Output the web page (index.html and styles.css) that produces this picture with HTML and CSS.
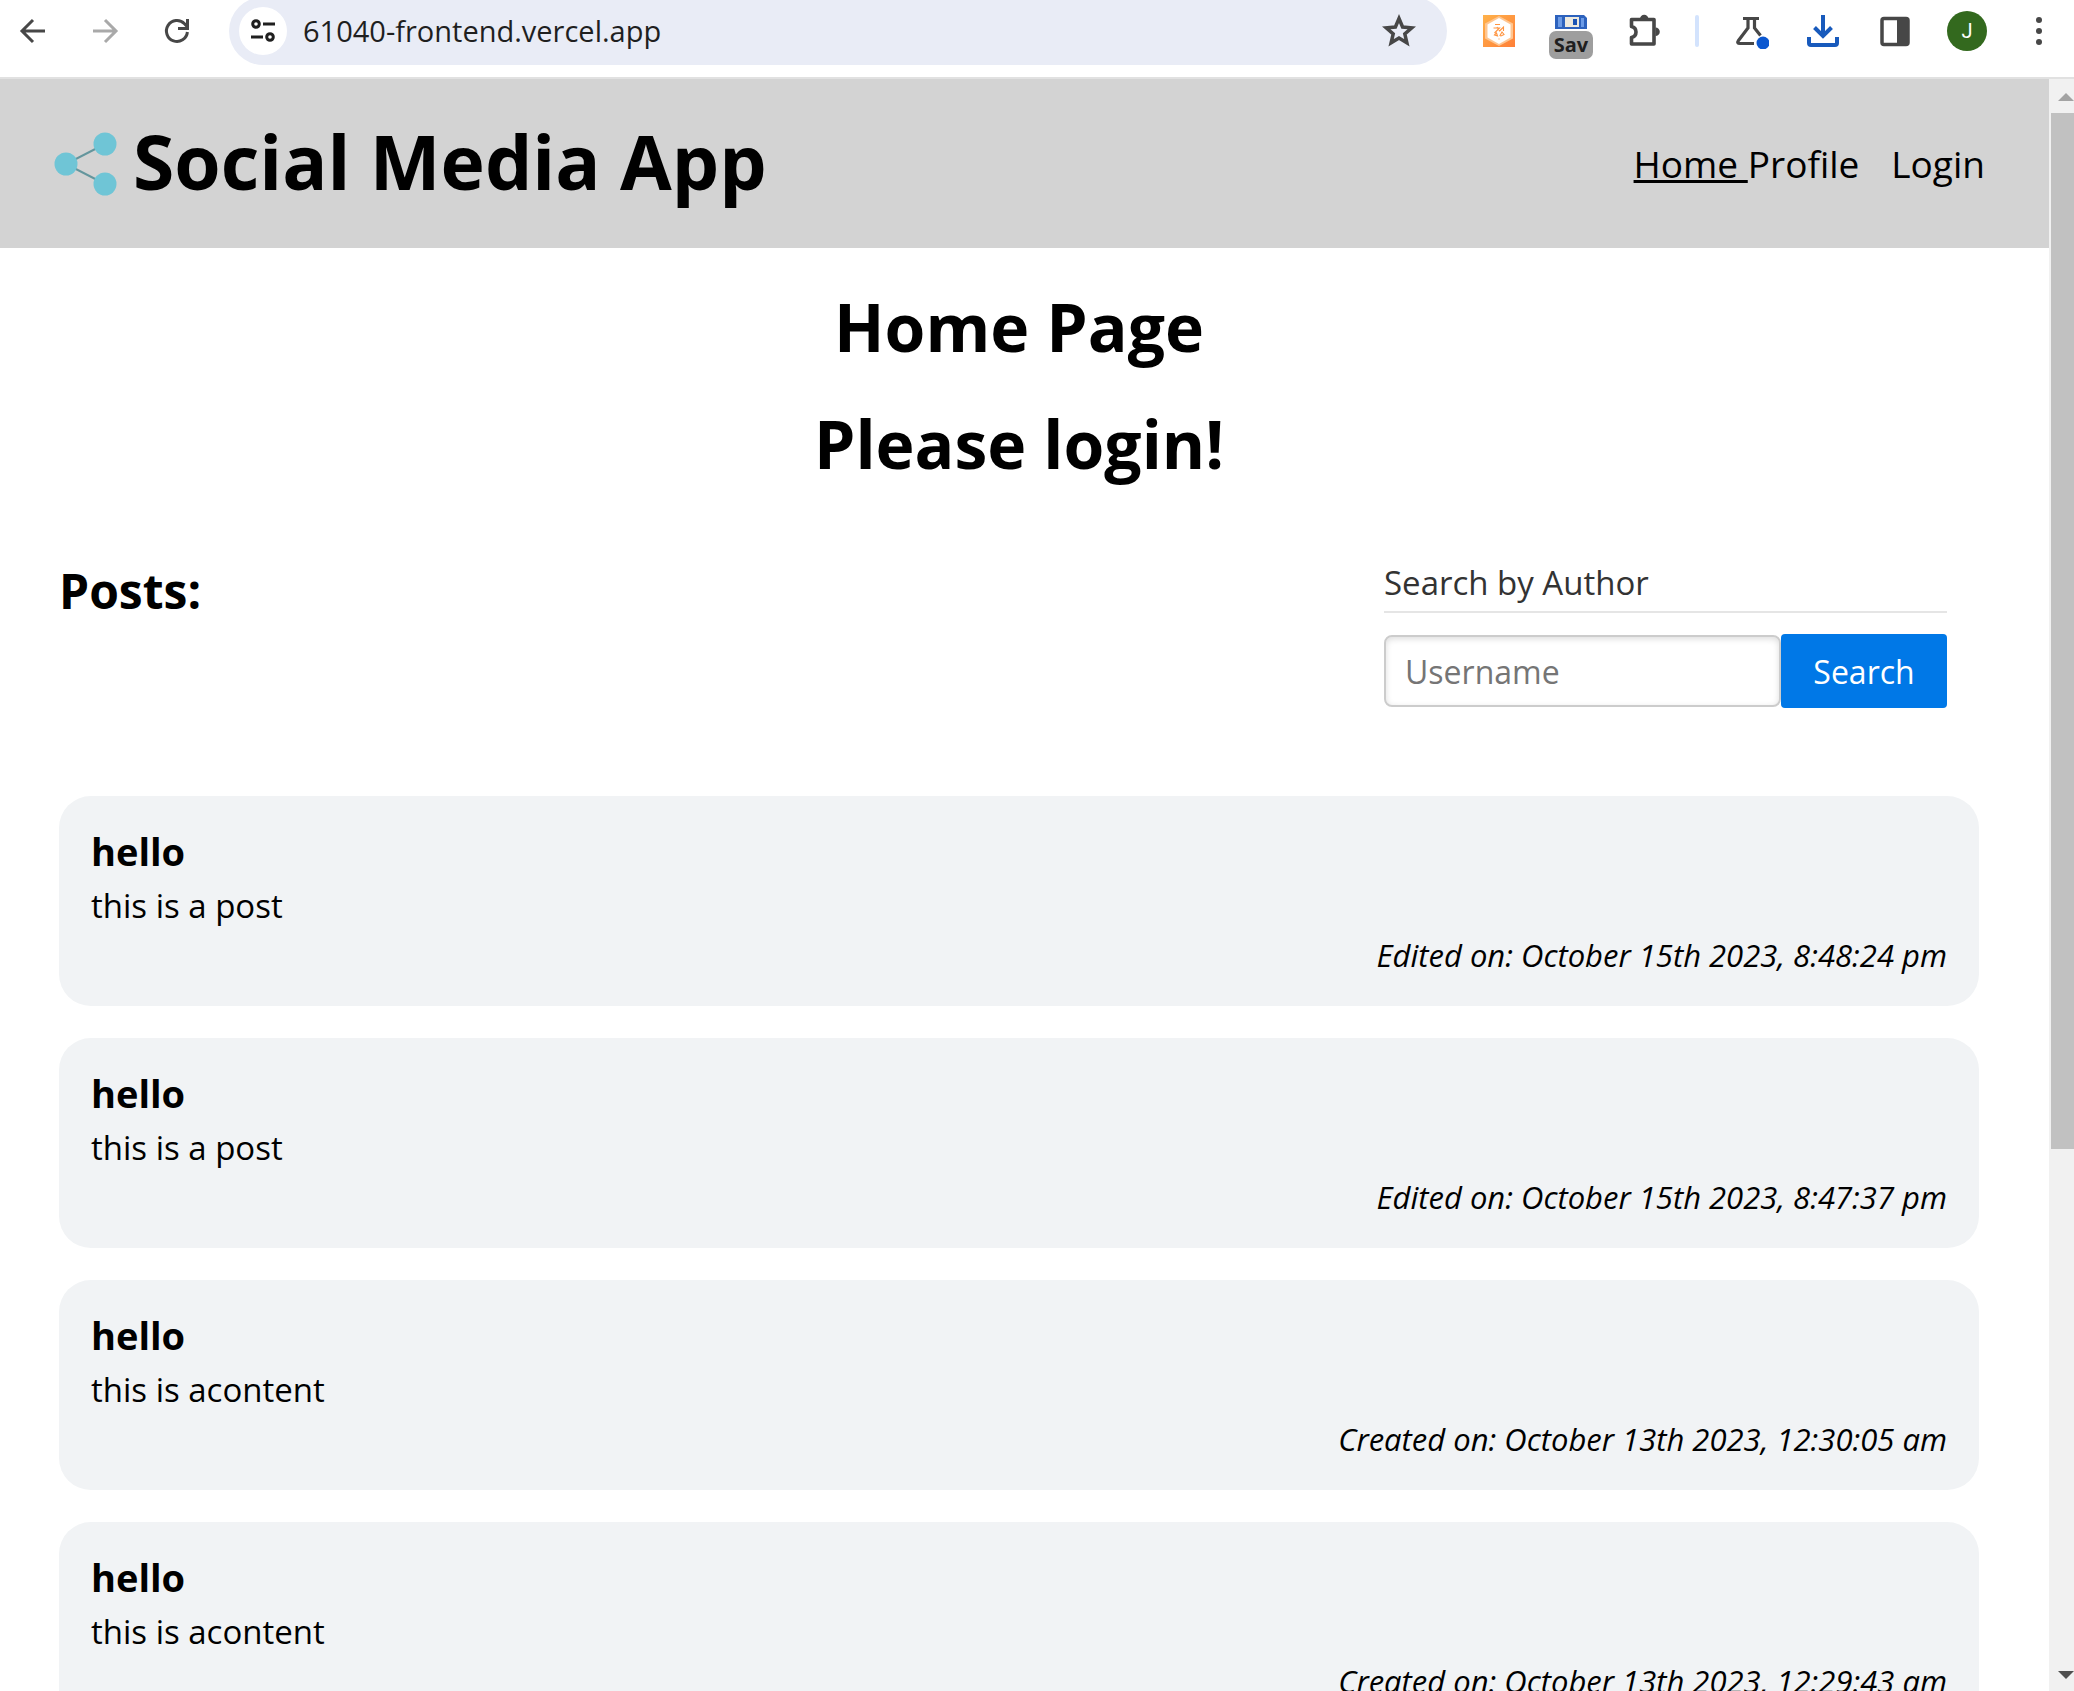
FILE: index.html
```html
<!DOCTYPE html>
<html lang="en">
<head>
<meta charset="utf-8">
<title>Social Media App</title>
<link rel="stylesheet" href="styles.css">
</head>
<body>
<div class="browser">
  <div class="toolbar">
    <button class="tool" aria-label="Back"><svg width="32" height="32" viewBox="0 0 32 32" fill="none" stroke="#474747" stroke-width="3"><path d="M28 16H6M16 5L5 16l11 11"/></svg></button>
    <button class="tool" aria-label="Forward"><svg width="32" height="32" viewBox="0 0 32 32" fill="none" stroke="#a9a9a9" stroke-width="3"><path d="M4 16h22M16 5l11 11-11 11"/></svg></button>
    <button class="tool" aria-label="Reload"><svg width="32" height="32" viewBox="0 0 32 32" fill="none" stroke="#474747" stroke-width="3"><path d="M26.400 17A10.500 10.500 0 1 1 23.500 8.700L26 11.500M26.500 4v9.500H17"/></svg></button>
    <div class="omnibox">
      <button class="site-info" aria-label="Site information"><svg width="28" height="28" viewBox="0 0 28 28" fill="none" stroke="#1f1f1f" stroke-width="3"><circle cx="7" cy="7" r="3.300"/><path d="M14 7h12M2 20h12"/><circle cx="21" cy="20" r="3.300"/></svg></button>
      <input class="url" type="text" value="61040-frontend.vercel.app" aria-label="Address">
      <button class="bookmark" aria-label="Bookmark this page"><svg width="34" height="34" viewBox="0 0 34 34" fill="none" stroke="#474747" stroke-width="3.500"><path d="M17 4.500l3.600 8.500 9.200.8-7 6 2.100 9L17 24l-7.900 4.800 2.100-9-7-6 9.200-.8z"/></svg></button>
    </div>
    <button class="tool" aria-label="Extension"><svg width="32" height="32" viewBox="0 0 32 32"><defs><linearGradient id="amber" x1="0" y1="0" x2="1" y2="1"><stop offset="0" stop-color="#ffb24a"/><stop offset="1" stop-color="#ff7f38"/></linearGradient></defs><path fill="url(#amber)" d="M0 0h32v32H0z"/><path fill="#ffc691" d="M16 1l14 7.500v15L16 31 2 23.500v-15z"/><path fill="#fff" d="M16 3l11.500 6.500v13L16 29 4.500 22.500v-13z"/><path d="M12 9.500h5M10.500 13h6l-5 5M14 12l3 4.500M16.500 16l4-4v4M11.500 20l2-2 1 3zM17 20.500l2-3.500 2 2.500-3 1.500zM15.500 24h1" fill="none" stroke="#ff9440" stroke-width="1.100"/></svg></button>
    <button class="tool tool-save" aria-label="Save extension"><svg width="32" height="14" viewBox="0 0 32 14"><path fill="#2d62bd" d="M0 0h29l3 3v11H0z"/><path fill="#6c9be6" d="M3 2h4v10H3zM26 3h3v9h-3z"/><path fill="#eeeade" d="M10 2h14v10H10z"/><path fill="#1c55b5" d="M18 4h4v6h-4z"/></svg><span class="badge">Sav</span></button>
    <button class="tool" aria-label="Extensions"><svg width="36" height="36" viewBox="0 0 36 36"><path d="M6.500 6.500h22.500v24.500H6.500V24.500C12.500 23 12.500 15 6.500 13.500z" fill="none" stroke="#474747" stroke-width="3.600" stroke-linejoin="round"/><path d="M15 6a4.200 4.200 0 0 1 8.400 0zM30.500 14.500a4.300 4.300 0 0 1 0 8.600z" fill="#474747"/></svg></button>
    <span class="divider"></span>
    <button class="tool" aria-label="Labs"><svg width="36" height="36" viewBox="0 0 36 36"><path d="M10 5.500h16M15 6v9L5.500 27.500Q3.500 30.500 7 30.500h14M21.500 6v9l6 7.500" fill="none" stroke="#474747" stroke-width="3.200"/><circle cx="30" cy="30" r="6.500" fill="#0b57d0"/></svg></button>
    <button class="tool" aria-label="Downloads"><svg width="32" height="32" viewBox="0 0 32 32" fill="none" stroke="#185abc" stroke-width="4"><path d="M16 0v21M7.500 12.500L16 21l8.500-8.500M2 22v6q0 2 2 2h24q2 0 2-2v-6"/></svg></button>
    <button class="tool" aria-label="Side panel"><svg width="32" height="32" viewBox="0 0 32 32"><rect x="3" y="3.500" width="26" height="26" rx="2" fill="none" stroke="#474747" stroke-width="3.500"/><path fill="#474747" d="M18 3h11v27H18z"/></svg></button>
    <button class="tool" aria-label="Profile J"><span class="avatar">J</span></button>
    <button class="tool" aria-label="Menu"><svg width="32" height="32" viewBox="0 0 32 32" fill="#474747"><circle cx="16" cy="5" r="3"/><circle cx="16" cy="16" r="3"/><circle cx="16" cy="27" r="3"/></svg></button>
  </div>

  <div class="viewport">
    <div class="page">
      <header class="site-header">
        <div class="brand">
          <svg width="64" height="64" viewBox="0 0 64 64"><path d="M51 12L12 32l39 20" fill="none" stroke="#64969d" stroke-width="2"/><g fill="#6fc5d6"><circle cx="12" cy="32" r="11.500"/><circle cx="51" cy="12" r="11.500"/><circle cx="51" cy="52" r="11.500"/></g></svg>
          <h1 class="brand-name">Social Media App</h1>
        </div>
        <nav class="nav"><a class="nav-link current" href="#home">Home </a><a class="nav-link" href="#profile">Profile</a><a class="nav-link nav-login" href="#login">Login</a></nav>
      </header>
      <main class="content">
        <section class="intro">
          <h1 class="headline">Home Page</h1>
          <h1 class="headline">Please login!</h1>
        </section>
        <div class="posts-bar">
          <h2 class="posts-title">Posts:</h2>
          <form class="search">
            <label class="search-label" for="author">Search by Author</label>
            <div class="search-row">
              <input class="search-input" id="author" type="text" placeholder="Username">
              <button class="search-button" type="button">Search</button>
            </div>
          </form>
        </div>
        <section class="posts">
          <article class="post"><h3 class="post-title">hello</h3><p class="post-text">this is a post</p><p class="post-date">Edited on: October 15th 2023, 8:48:24 pm</p></article>
          <article class="post"><h3 class="post-title">hello</h3><p class="post-text">this is a post</p><p class="post-date">Edited on: October 15th 2023, 8:47:37 pm</p></article>
          <article class="post"><h3 class="post-title">hello</h3><p class="post-text">this is acontent</p><p class="post-date">Created on: October 13th 2023, 12:30:05 am</p></article>
          <article class="post"><h3 class="post-title">hello</h3><p class="post-text">this is acontent</p><p class="post-date">Created on: October 13th 2023, 12:29:43 am</p></article>
        </section>
      </main>
    </div>
    <div class="scrollbar">
      <svg class="arrow" width="16" height="8" viewBox="0 0 16 8"><path fill="#a3a3a3" d="M0 8l8-8 8 8z"/></svg>
      <div class="track"><div class="thumb"></div></div>
      <svg class="arrow" width="16" height="8" viewBox="0 0 16 8"><path fill="#505050" d="M0 0h16L8 8z"/></svg>
    </div>
  </div>
</div>
</body>
</html>
```
FILE: styles.css
```css
* { box-sizing: border-box; }

body {
  margin: 0;
  background: #fff;
  color: #000;
  font-family: "Open Sans", "Noto Sans", sans-serif;
  font-size: 33px;
}

h1, h2, h3, p { margin: 0; }

button {
  padding: 0;
  border: 0;
  background: none;
  font: inherit;
}

.browser {
  display: flex;
  flex-direction: column;
  height: 100vh;
  overflow: hidden;
}

/* Browser toolbar */
.toolbar {
  flex: none;
  display: flex;
  align-items: flex-start;
  gap: 8px;
  height: 79px;
  padding: 0 3px 0 1px;
  border-bottom: 2px solid #e1e1e1;
  overflow: hidden;
}

.tool {
  flex: none;
  display: flex;
  align-items: center;
  justify-content: center;
  width: 64px;
  height: 62px;
}

.omnibox {
  flex: 1;
  display: flex;
  align-items: center;
  height: 68px;
  margin: -3px 12px 0;
  padding: 0 31px 0 10px;
  border-radius: 34px;
  background: #e9ecf6;
}

.site-info {
  display: flex;
  align-items: center;
  justify-content: center;
  width: 48px;
  height: 48px;
  border-radius: 50%;
  background: #fff;
}

.url {
  flex: 1;
  min-width: 0;
  margin-left: 16px;
  padding: 0 0 2px;
  border: 0;
  outline: 0;
  background: none;
  color: #1f1f1f;
  font: 29px "Open Sans", sans-serif;
}

.bookmark { display: flex; }

.tool-save {
  flex-direction: column;
  justify-content: flex-end;
  gap: 2px;
  height: 59px;
}

.badge {
  width: 44px;
  height: 28px;
  border-radius: 7px;
  background: #9e9e9e;
  color: #1f1f1f;
  font-size: 20px;
  font-weight: 700;
  line-height: 28px;
  text-align: center;
}

.divider {
  flex: none;
  width: 4px;
  height: 32px;
  margin: 15px 12px 0;
  border-radius: 2px;
  background: #d3e3fd;
}

.avatar {
  width: 40px;
  height: 40px;
  border-radius: 50%;
  background: #33691e;
  color: #fff;
  font: 20px/40px Roboto, sans-serif;
  text-align: center;
}

/* Page area and its scrollbar */
.viewport {
  flex: 1;
  display: flex;
  min-height: 0;
}

.page {
  flex: 1;
  overflow: hidden;
}

.scrollbar {
  display: flex;
  flex-direction: column;
  align-items: flex-end;
  width: 25px;
  padding: 14px 0 12px;
  background: #f1f1f1;
}

.arrow { flex: none; }

.track {
  flex: 1;
  width: 23px;
  margin: 12px 0;
}

.thumb {
  height: 67%;
  background: #c1c1c1;
}

.site-header {
  display: flex;
  align-items: center;
  justify-content: space-between;
  height: 169px;
  padding: 0 64px 0 54px;
  background: #d3d3d3;
}

.brand {
  display: flex;
  align-items: center;
  gap: 15px;
}

.brand-name {
  padding-bottom: 6px;
  font-size: 75px;
  line-height: 96px;
}

.nav {
  display: flex;
  font-size: 37px;
  line-height: 48px;
}

.nav-link {
  color: #000;
  text-decoration: none;
  white-space: pre;
}

.current { text-decoration: underline; }

.nav-login { margin-left: 32px; }

.content { padding: 20px 70px 32px 59px; }

.headline {
  padding: 12px 0;
  font-size: 66px;
  line-height: 93px;
  text-align: center;
}

.posts-bar {
  display: flex;
  justify-content: space-between;
  padding: 61px 32px 0 0;
}

.posts-title {
  font-size: 48px;
  line-height: 56px;
}

.search { width: 563px; }

.search-label {
  display: block;
  padding-bottom: 8px;
  border-bottom: 2px solid #e5e5e5;
  color: #333;
  line-height: 40px;
}

.search-row {
  display: flex;
  align-items: center;
  margin-top: 21px;
  font-size: 32px;
}

.search-input {
  flex: 1;
  min-width: 0;
  height: 72px;
  padding: 0 19px;
  border: 2px solid #ccc;
  border-radius: 8px;
  box-shadow: inset 0 2px 6px #ddd;
  font: inherit;
}

.search-input::placeholder { color: #757575; }

.search-button {
  width: 166px;
  height: 74px;
  border-radius: 4px;
  background: #0078e7;
  color: #fff;
}

.posts {
  display: flex;
  flex-direction: column;
  gap: 32px;
  margin-top: 88px;
}

.post {
  height: 210px;
  padding: 32px;
  border-radius: 32px;
  background: #f1f3f5;
}

.post-title {
  font-size: 38px;
  line-height: 46px;
}

.post-text {
  margin-top: 8px;
  line-height: 48px;
}

.post-date {
  font-size: 31px;
  font-style: italic;
  line-height: 50px;
  text-align: right;
}
```
